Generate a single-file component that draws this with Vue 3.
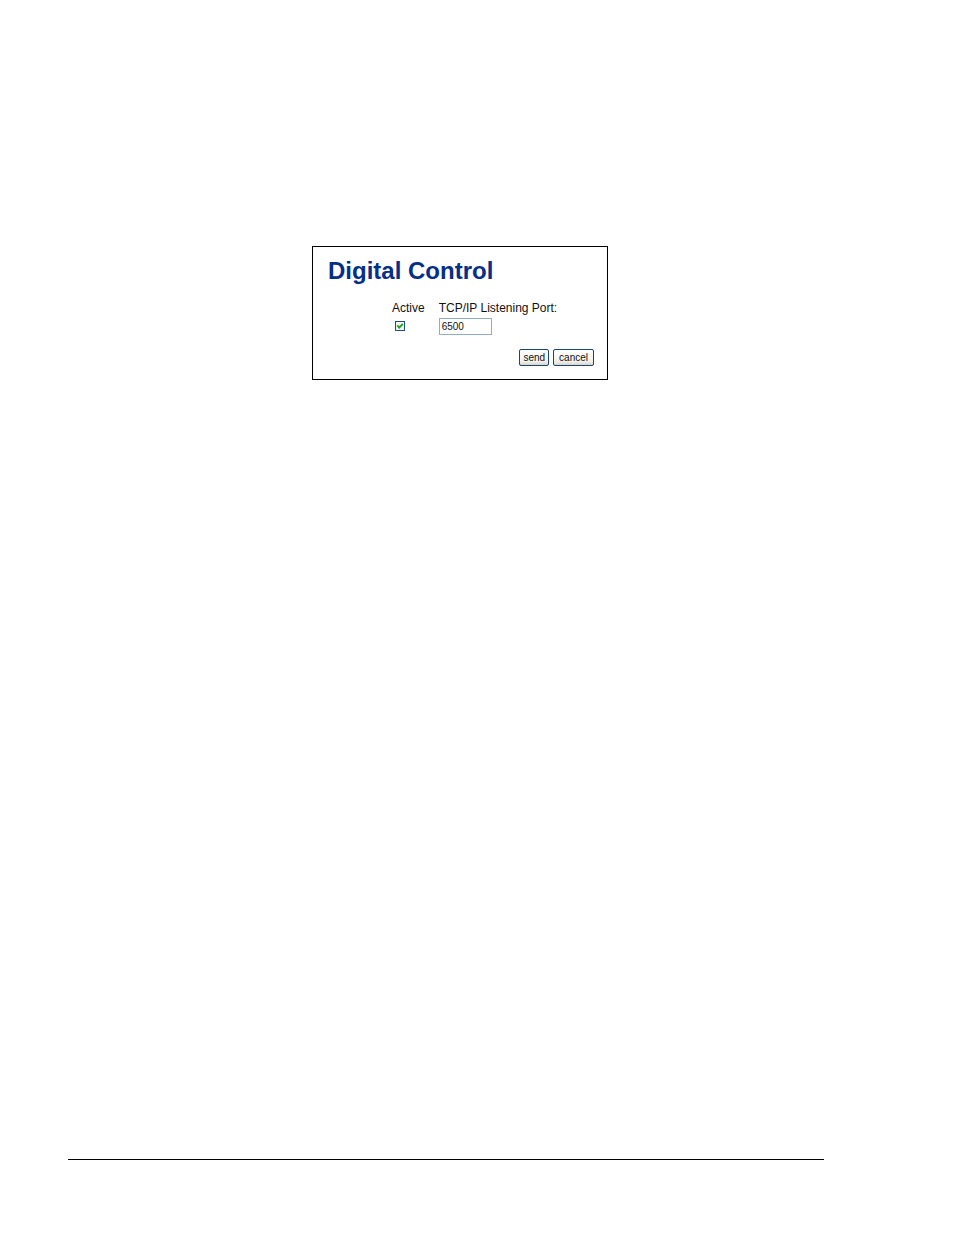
<script setup>
import { ref } from 'vue'

const active = ref(true)
const port = ref('6500')

function reset() {
  active.value = true
  port.value = '6500'
}
</script>

<template>
  <div class="page">
    <main class="content">
      <form class="panel" @submit.prevent @reset.prevent="reset">
        <h1>Digital Control</h1>
        <div class="fields">
          <div class="field">
            <label for="active">Active</label>
            <span class="check">
              <input id="active" v-model="active" type="checkbox" />
              <svg v-if="active" viewBox="0 0 10 10" aria-hidden="true">
                <path d="M2.3 4.4 4.2 6.6 7.8 3" />
              </svg>
            </span>
          </div>
          <div class="field">
            <label for="port">TCP/IP Listening Port:</label>
            <input id="port" v-model="port" class="port" type="text" />
          </div>
        </div>
        <div class="actions">
          <button type="submit">send</button>
          <button type="reset">cancel</button>
        </div>
      </form>
    </main>
    <hr class="rule" />
  </div>
</template>

<style>
body {
  margin: 0;
  background: #fff;
}
</style>

<style scoped>
.page {
  box-sizing: border-box;
  display: flex;
  flex-direction: column;
  min-height: 100vh;
  padding: 246px 130px 75px 68px;
  color: #111;
  font-family: 'Liberation Sans', Arial, sans-serif;
}

.content {
  flex: 1;
  padding-left: 244px;
}

.panel {
  box-sizing: border-box;
  width: 100%;
  max-width: 296px;
  padding: 10px 13px 13px 15px;
  border: 1px solid #000;
}

h1 {
  margin: 0;
  color: #062f87;
  font-size: 24px;
  font-weight: bold;
  line-height: 28px;
}

.fields {
  display: flex;
  gap: 14px;
  margin-top: 15px;
  padding-left: 64px;
}

.field {
  display: flex;
  flex-direction: column;
  gap: 2px;
}

label {
  font-size: 12px;
  line-height: 16px;
  white-space: nowrap;
}

.check {
  position: relative;
  width: 10px;
  height: 10px;
  margin: 3px;
}

.check input {
  display: block;
  appearance: none;
  box-sizing: border-box;
  width: 100%;
  height: 100%;
  margin: 0;
  border: 1px solid #1c5180;
  background: #f3f5f1;
}

.check svg {
  position: absolute;
  inset: 0;
  fill: none;
  stroke: #21a121;
  stroke-width: 1.8;
  pointer-events: none;
}

.port {
  box-sizing: border-box;
  width: 53px;
  height: 17px;
  padding: 0 2px;
  border: 1px solid #8fadc8;
  background: #fff;
  color: #111;
  font-family: inherit;
  font-size: 10px;
}

.actions {
  display: flex;
  justify-content: flex-end;
  gap: 4px;
  margin-top: 14px;
}

button {
  box-sizing: border-box;
  height: 17px;
  padding: 0 3px;
  border: 1px solid #1b4570;
  border-radius: 2px;
  background: linear-gradient(#fff, #f2f1eb 75%, #d9d4c8);
  color: #111;
  font-family: inherit;
  font-size: 10px;
  line-height: 15px;
}

button[type='reset'] {
  padding: 0 5px;
}

.rule {
  width: 100%;
  height: 1px;
  margin: 0;
  border: 0;
  background: #000;
}
</style>
